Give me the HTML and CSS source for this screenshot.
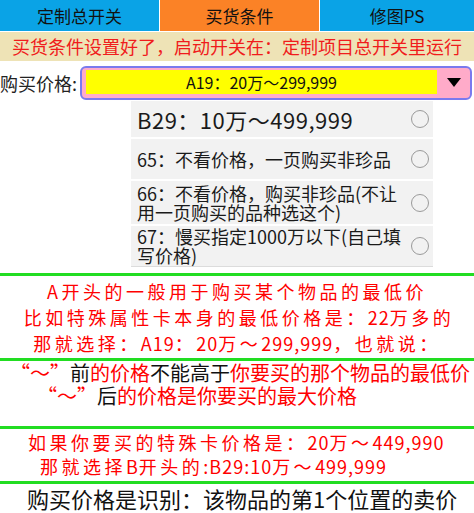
FILE: index.html
```html
<!DOCTYPE html>
<html lang="zh">
<head>
<meta charset="utf-8">
<link rel="stylesheet" href="styles.css">
</head>
<body>
<div class="tabs">
  <div class="tab">定制总开关</div>
  <div class="tab active">买货条件</div>
  <div class="tab">修图PS</div>
</div>
<div class="banner">买货条件设置好了，启动开关在：定制项目总开关里运行</div>
<div class="price-row">
  <div class="label">购买价格:</div>
  <div class="select">
    <div class="select-value">A19：20万～299,999</div>
    <div class="select-arrow"><svg width="14" height="9" viewBox="0 0 14 9"><path d="M0 0H14L7 9Z" fill="#000"/></svg></div>
  </div>
</div>
<ul class="options">
  <li class="opt opt-big"><span class="opt-text">B29：10万～499,999</span><span class="radio"></span></li>
  <li class="opt opt-2"><span class="opt-text">65：不看价格，一页购买非珍品</span><span class="radio"></span></li>
  <li class="opt opt-3"><span class="opt-text">66：不看价格，购买非珍品(不让用一页购买的品种选这个)</span><span class="radio"></span></li>
  <li class="opt opt-4"><span class="opt-text">67：慢买指定1000万以下(自己填写价格)</span><span class="radio"></span></li>
</ul>
<div class="rule"></div>
<div class="block b1">
  <p class="l1a">A开头的一般用于购买某个物品的最低价</p>
  <p class="l1b">比如特殊属性卡本身的最低价格是：<span class="n">22</span>万多的</p>
  <p class="l1c">那就选择：<span class="n">A19</span>：<span class="n">20</span>万～<span class="n">299,999</span>，也就说：</p>
</div>
<div class="rule"></div>
<div class="block b2">
  <p class="l2a"><span class="red">“～”</span>前<span class="red">的价格</span>不能高于<span class="red">你要买的那个物品的最低价</span></p>
  <p class="l2b"><span class="red">“～”</span>后<span class="red">的价格是你要买的最大价格</span></p>
</div>
<div class="rule"></div>
<div class="block b3">
  <p class="l3a">如果你要买的特殊卡价格是：<span class="n">20</span>万～<span class="n">449,990</span></p>
  <p class="l3b">那就选择<span class="n">B</span>开头的<span class="n">:B29:10</span>万～<span class="n">499,999</span></p>
</div>
<div class="rule"></div>
<div class="block b4">购买价格是识别：该物品的第1个位置的卖价</div>
</body>
</html>
```
FILE: styles.css
```css
* { box-sizing: border-box; }
html, body { margin: 0; padding: 0; }
body {
  width: 474px;
  height: 513px;
  overflow: hidden;
  background: #fff;
  font-family: "Noto Sans CJK SC", "Noto Sans", sans-serif;
  color: #111;
}
p { margin: 0; }

.tabs {
  display: grid;
  grid-template-columns: 159px 159px 154px;
  column-gap: 1px;
  height: 31px;
  background: #fff;
}
.tab {
  background: #0aa3e6;
  font-size: 17px;
  line-height: 31px;
  text-align: center;
  color: #111;
}
.tab.active { background: #fb8226; }

.banner {
  margin-top: 1px;
  height: 29px;
  background: #eee3b6;
  color: #f01c1c;
  font-size: 18px;
  line-height: 29px;
  text-align: center;
}

.price-row {
  display: flex;
  align-items: center;
  margin-top: 5px;
  height: 34px;
}
.label {
  width: 80px;
  font-size: 18px;
  color: #222;
}
.select {
  width: 392px;
  height: 34px;
  border: 2px solid #7a7aee;
  border-radius: 6px;
  background: #ffabc9;
  display: flex;
  align-items: stretch;
  padding: 2px 2px 4px 4px;
}
.select-value {
  flex: 0 0 351px;
  background: #ffff00;
  font-size: 16px;
  line-height: 24px;
  text-align: center;
  color: #111;
}
.select-arrow {
  flex: 1;
  display: flex;
  align-items: center;
  justify-content: center;
  padding-left: 2px;
}

.options {
  list-style: none;
  margin: 0 0 0 131px;
  padding: 1px 0 0;
  width: 302px;
  display: flex;
  flex-direction: column;
  gap: 2px;
  border-bottom: 1px solid #dcdcdc;
}
.opt {
  display: flex;
  align-items: center;
  background: #f2f2f2;
  padding: 0 4px 0 6px;
  color: #1a1a1a;
  font-size: 18px;
  line-height: 19px;
}
.opt-text { flex: 1; padding-right: 6px; }
.opt-big { height: 36px; font-size: 22px; letter-spacing: 0.5px; }
.opt-2 { height: 40px; }
.opt-3 { height: 43px; }
.opt-4 { height: 40px; }
.radio {
  flex: 0 0 18px;
  height: 18px;
  border: 1.5px solid #9a9a9a;
  border-radius: 50%;
}

.rule {
  height: 3px;
  background: #22dd22;
}
.options + .rule { margin-top: 6px; }

.block { color: #ff0000; }
.b1, .b3 { font-size: 18px; letter-spacing: 3.5px; }
.b1 .n, .b3 .n { letter-spacing: 1px; }
.b1 { height: 82px; padding-top: 2px; line-height: 26px; text-align: center; }
.l1b { padding-left: 4px; }

.b2 { height: 65px; padding-top: 0; font-size: 20px; line-height: 23px; color: #111; }
.b2 .red { color: #ff0000; }
.l2a { padding-left: 10px; white-space: nowrap; }
.l2b { padding-left: 37px; }

.b3 { height: 52px; padding-top: 1px; line-height: 24px; }
.l3a { padding-left: 28px; }
.l3b { padding-left: 40px; }

.b4 {
  color: #111;
  font-size: 22px;
  line-height: 29px;
  padding-left: 27px;
  white-space: nowrap;
}
```
